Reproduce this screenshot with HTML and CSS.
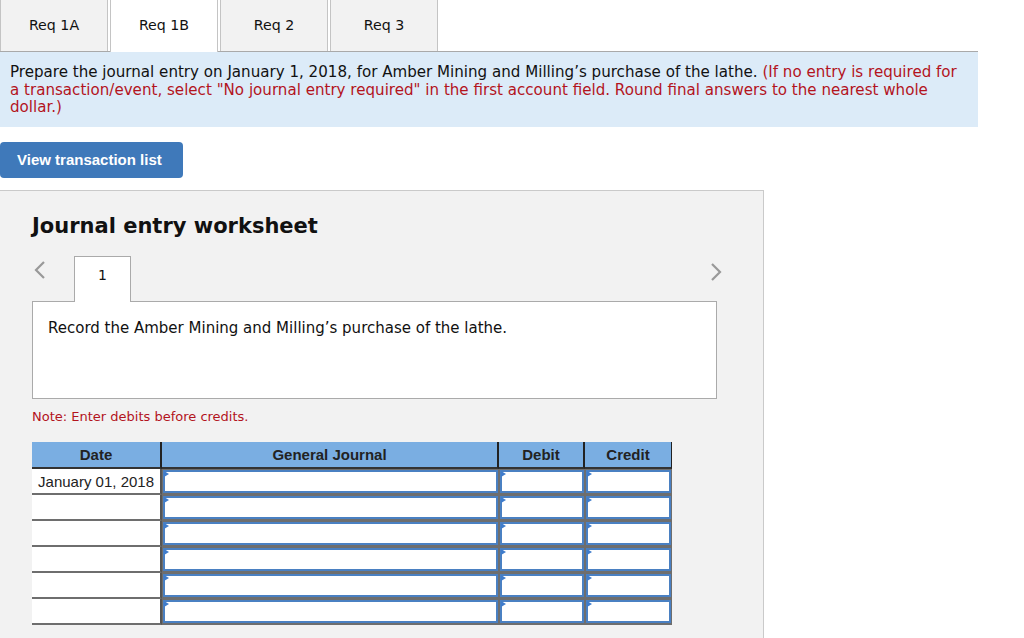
FILE: index.html
```html
<!DOCTYPE html>
<html lang="en">
<head>
  <meta charset="UTF-8">
  <title>Journal entry worksheet</title>
  <link rel="stylesheet" href="styles.css">
</head>
<body>
  <nav class="req-tabs">
    <div class="req-tab">Req 1A</div>
    <div class="req-tab active">Req 1B</div>
    <div class="req-tab">Req 2</div>
    <div class="req-tab">Req 3</div>
  </nav>

  <div class="instructions">
    <p>Prepare the journal entry on January 1, 2018, for Amber Mining and Milling’s purchase of the lathe. <span class="hint">(If no entry is required for a transaction/event, select "No journal entry required" in the first account field. Round final answers to the nearest whole dollar.)</span></p>
  </div>

  <button class="view-btn">View transaction list</button>

  <section class="worksheet">
    <h2>Journal entry worksheet</h2>

    <div class="entry-nav">
      <svg class="arrow" width="14" height="20" viewBox="0 0 14 20">
        <polyline points="11,2 3,10 11,18" fill="none" stroke="#999" stroke-width="2.2"/>
      </svg>
      <div class="entry-tab">1</div>
      <svg class="arrow right" width="14" height="20" viewBox="0 0 14 20">
        <polyline points="3,2 11,10 3,18" fill="none" stroke="#999" stroke-width="2.2"/>
      </svg>
    </div>

    <div class="record-box">
      <p>Record the Amber Mining and Milling’s purchase of the lathe.</p>
    </div>

    <p class="note">Note: Enter debits before credits.</p>

    <div class="journal">
      <div class="jh">Date</div>
      <div class="jh">General Journal</div>
      <div class="jh">Debit</div>
      <div class="jh last">Credit</div>

      <div class="jdate">January 01, 2018</div>
      <div class="jcell"><div class="jinput"></div></div>
      <div class="jcell"><div class="jinput"></div></div>
      <div class="jcell"><div class="jinput"></div></div>

      <div class="jdate"></div>
      <div class="jcell"><div class="jinput"></div></div>
      <div class="jcell"><div class="jinput"></div></div>
      <div class="jcell"><div class="jinput"></div></div>

      <div class="jdate"></div>
      <div class="jcell"><div class="jinput"></div></div>
      <div class="jcell"><div class="jinput"></div></div>
      <div class="jcell"><div class="jinput"></div></div>

      <div class="jdate"></div>
      <div class="jcell"><div class="jinput"></div></div>
      <div class="jcell"><div class="jinput"></div></div>
      <div class="jcell"><div class="jinput"></div></div>

      <div class="jdate"></div>
      <div class="jcell"><div class="jinput"></div></div>
      <div class="jcell"><div class="jinput"></div></div>
      <div class="jcell"><div class="jinput"></div></div>

      <div class="jdate"></div>
      <div class="jcell"><div class="jinput"></div></div>
      <div class="jcell"><div class="jinput"></div></div>
      <div class="jcell"><div class="jinput"></div></div>
    </div>
  </section>
</body>
</html>
```

FILE: styles.css
```css
body {
  font-family: "DejaVu Sans", Verdana, sans-serif;
  color: #111;
  background-color: #fff;
  margin: 0;
  padding: 0;
}
.req-tabs {
  display: flex;
  width: 978px;
  height: 51px;
  border-bottom: 1px solid #a9a9a9;
}
.req-tab {
  width: 106px;
  margin-right: 2px;
  margin-top: -2px;
  background-color: #f2f2f2;
  border: 1px solid #c4c4c4;
  border-bottom: none;
  display: flex;
  align-items: center;
  justify-content: center;
  font-size: 14.2px;
}
.req-tab.active {
  background-color: #fff;
  margin-bottom: -1px;
  padding-bottom: 1px;
  position: relative;
  z-index: 1;
}
.instructions {
  width: 958px;
  background-color: #dcebf8;
  padding: 12px 10px 10px;
  font-size: 15.1px;
  line-height: 17.5px;
}
.instructions p {
  margin: 0;
}
.hint {
  color: #b3141d;
}
.view-btn {
  display: block;
  margin-top: 15px;
  width: 183px;
  height: 36px;
  padding: 0 0 0 17px;
  text-align: left;
  background-color: #3f79ba;
  color: #fff;
  border: none;
  border-radius: 4px;
  font-family: "Liberation Sans", Arial, sans-serif;
  font-weight: bold;
  font-size: 15px;
}
.worksheet {
  margin-top: 12px;
  width: 731px;
  height: 428px;
  padding: 20px 0 0 32px;
  background-color: #f2f2f2;
  border: 1px solid #cacaca;
  border-left: none;
  border-bottom: none;
}
.worksheet h2 {
  margin: 0;
  font-size: 21px;
  line-height: 30px;
}
.entry-nav {
  display: flex;
  align-items: flex-end;
  width: 685px;
  margin-top: 13px;
  height: 47px;
}
.arrow {
  align-self: flex-start;
  margin: 6px 27px 0 1px;
}
.arrow.right {
  margin: 8px -6px 0 auto;
}
.entry-tab {
  width: 57px;
  height: 46px;
  background-color: #fff;
  border: 1px solid #aaa;
  border-bottom: none;
  text-align: center;
  font-size: 14px;
  padding-top: 10px;
  box-sizing: border-box;
  position: relative;
  top: 1px;
}
.record-box {
  width: 683px;
  height: 96px;
  background-color: #fff;
  border: 1px solid #aaa;
}
.record-box p {
  margin: 0;
  padding: 17px 0 0 15px;
  font-size: 15px;
}
.note {
  margin: 10px 0 0;
  font-size: 13px;
  color: #b3141d;
}
.journal {
  display: grid;
  grid-template-columns: 130px 337px 86px 87px;
  grid-template-rows: 27px repeat(6, 26px);
  width: 640px;
  margin-top: 18px;
  font-family: "Liberation Sans", Arial, sans-serif;
  font-size: 15px;
}
.jh {
  background-color: #7aaee2;
  border-right: 2px solid #222;
  border-bottom: 2px solid #333;
  box-sizing: border-box;
  font-weight: bold;
  color: #222;
  text-align: center;
  line-height: 25px;
}
.jh.last {
  border-right: 1px solid #222;
}
.jdate {
  background-color: #fff;
  border-bottom: 2px solid #6e6e6e;
  border-right: 2px solid #555;
  box-sizing: border-box;
  text-align: right;
  padding-right: 6px;
  line-height: 25px;
  color: #222;
}
.jcell {
  background-color: #6e6e6e;
  padding: 1px 1px 2px;
  box-sizing: border-box;
}
.jinput {
  position: relative;
  height: 100%;
  box-sizing: border-box;
  background-color: #fff;
  border: 2px solid #4a80c2;
}
.jinput::before {
  content: "";
  position: absolute;
  top: -1px;
  left: -1px;
  border-left: 5px solid #3f7ccb;
  border-top: 3px solid transparent;
  border-bottom: 3px solid transparent;
}
```
